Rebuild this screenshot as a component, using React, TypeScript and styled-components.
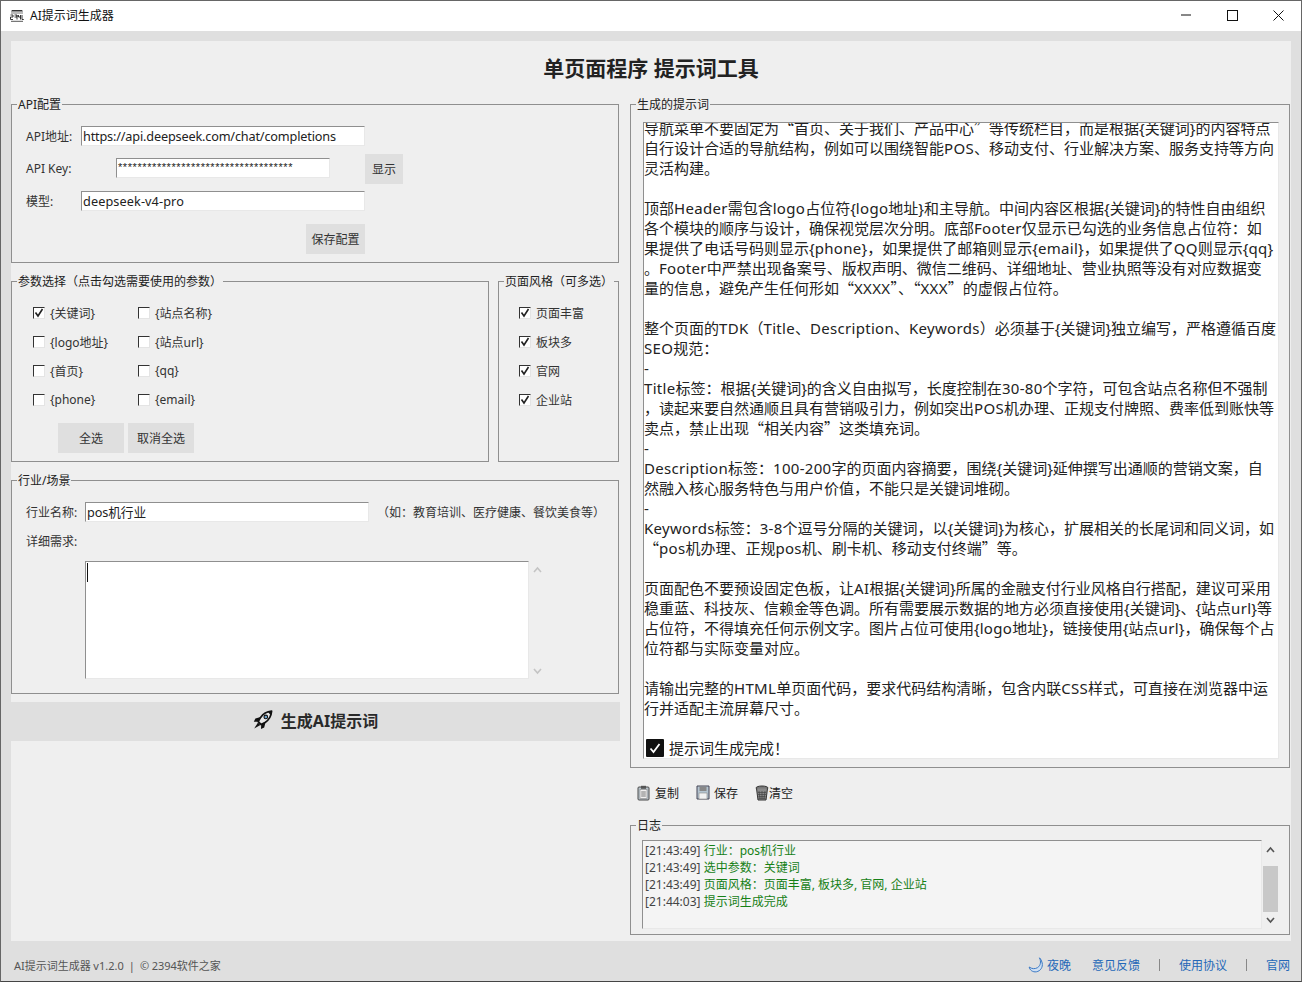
import React from "react";
import styled, { createGlobalStyle } from "styled-components";

const Global = createGlobalStyle`
  html, body { margin: 0; padding: 0; background: #dfdfdf; }
  * { box-sizing: border-box; }
  body { font-family: "Noto Sans", "Noto Sans CJK SC", sans-serif; font-size: 12px; color: #222; }
`;

const Win = styled.div`
  width: 1302px; height: 982px; display: flex; flex-direction: column;
  background: #dfdfdf; border: 1px solid #666; border-bottom-color: #444; overflow: hidden;
`;
const TitleBar = styled.div`
  height: 30px; flex: none; background: #fff; display: flex; align-items: center; padding: 0 0 2px 9px;
  font-size: 12px; color: #111;
`;
const TitleText = styled.span`flex: 1; margin-left: 6px;`;
const WinBtn = styled.span`
  width: 46px; height: 28px; display: flex; align-items: center; justify-content: center;
`;
const Main = styled.div`
  margin: 10px 10px 0; height: 900px; flex: none; background: #efefef; display: flex; flex-direction: column;
`;
const Heading = styled.h1`
  margin: 0; height: 55px; flex: none; padding-top: 12px; text-align: center; font-size: 21px; line-height: 30px; font-weight: 700; color: #222;
`;
const Cols = styled.div`
  display: flex; gap: 10px; align-items: flex-start;
`;
const Col = styled.div<{ $w: number }>`
  width: ${(p) => p.$w}px; flex: none; display: flex; flex-direction: column;
`;
const Group = styled.fieldset<{ $h: number; $w?: number; $mt?: number }>`
  margin: ${(p) => p.$mt ?? 0}px 0 0; padding: 0; min-width: 0; border: 1px solid #8f8f8f; height: ${(p) => p.$h}px;
  width: ${(p) => (p.$w ? p.$w + "px" : "auto")}; flex: none; display: block;
`;
const Legend = styled.legend`
  margin-left: 5px; padding: 2px 1px 0; height: 16px; font-size: 12px; line-height: 14px; color: #222;
`;
const ApiBody = styled.div`
  padding: 14px 0 0 14px; display: flex; flex-direction: column;
`;
const FormRow = styled.div<{ $h: number; $mt?: number }>`
  height: ${(p) => p.$h}px; margin-top: ${(p) => p.$mt ?? 0}px; display: flex; align-items: center;
`;
const Label = styled.label<{ $w: number; $mb?: number }>`
  width: ${(p) => p.$w}px; flex: none; font-size: 12px; color: #333; margin-bottom: ${(p) => p.$mb ?? 0}px;
`;
const Field = styled.div<{ $w: number; $ls?: number }>`
  width: ${(p) => p.$w}px; height: 20px; flex: none; background: #fff; padding-left: 1px; font-size: 12.7px; letter-spacing: ${(p) => p.$ls ?? -0.1}px; line-height: 19px; color: #222;
  border-top: 1px solid #8f8f8f; border-left: 1px solid #8f8f8f; border-right: 1px solid #e8e8e8; border-bottom: 1px solid #e8e8e8;
  white-space: nowrap; overflow: hidden;
`;
const Stars = styled(Field)`
  font-size: 11px; line-height: 17px; font-family: "Liberation Sans", sans-serif; letter-spacing: 0.58px; margin-bottom: 2px;
`;
const Btn = styled.button<{ $w: number; $ml?: number }>`
  width: ${(p) => p.$w}px; height: 30px; flex: none; margin-left: ${(p) => p.$ml ?? 0}px; border: 0; padding: 0 0 1px;
  background: #dfdfdf; font: inherit; font-size: 12px; color: #333;
`;
const SplitRow = styled.div`
  display: flex; gap: 9px; margin-top: 10px;
`;
const CheckGrid = styled.div`
  display: grid; grid-template-columns: 105px 120px; grid-auto-rows: 29px; padding: 9px 0 0 21px;
`;
const CheckOne = styled.div`
  display: flex; flex-direction: column; gap: 0; padding: 9px 0 0 20px;
`;
const CheckRow = styled.label`
  height: 29px; display: flex; align-items: center; gap: 5px; font-size: 12px; color: #333; white-space: nowrap;
`;
const Box = styled.span`
  width: 12px; height: 12px; flex: none; background: #fff; display: flex; align-items: center; justify-content: center;
  border-top: 1px solid #333; border-left: 1px solid #333; border-right: 1px solid #e4e4e4; border-bottom: 1px solid #e4e4e4;
`;
const BtnRow = styled.div`
  display: flex; gap: 4px; padding: 9px 0 0 46px;
`;
const IndustryBody = styled.div`
  padding: 14px 0 0 14px; display: flex; flex-direction: column;
`;
const Hint = styled.span`
  margin-left: 8px; font-size: 12px; color: #333; white-space: nowrap;
`;
const DetailLabel = styled.div`
  margin-top: 12px; height: 16px; line-height: 16px; font-size: 12px; color: #333;
`;
const TextRow = styled.div`
  display: flex; margin: 11px 0 0 73px; height: 118px;
`;
const TextBox = styled.div`
  width: 444px; height: 118px; background: #fff; padding: 1px 0 0 1px;
  border-top: 1px solid #8f8f8f; border-left: 1px solid #8f8f8f; border-right: 1px solid #e8e8e8; border-bottom: 1px solid #e8e8e8;
`;
const Caret = styled.div`width: 1px; height: 19px; background: #111;`;
const ScrollTrack = styled.div`
  width: 17px; display: flex; flex-direction: column; justify-content: space-between; align-items: center; padding: 5px 0 4px;
`;
const GenerateBtn = styled.button`
  margin-top: 8px; height: 39px; width: 609px; border: 0; background: #dfdfdf; display: flex; align-items: center; justify-content: center; gap: 8px;
  font: inherit; font-size: 16px; font-weight: 700; color: #2a2a2a; padding: 0 0 3px;
`;
const PromptBox = styled.div`
  margin: 10px 10px 0 12px; height: 637px; background: #fff; overflow: hidden;
  border-top: 1px solid #8f8f8f; border-left: 1px solid #8f8f8f; border-right: 1px solid #e8e8e8; border-bottom: 1px solid #e8e8e8;
`;
const PromptInner = styled.div`margin-top: -5px;`;
const Line = styled.div`
  height: 20px; line-height: 20px; font-size: 15px; color: #222; white-space: nowrap;
`;
const Quote = styled.span`font-family: "Noto Sans CJK SC", sans-serif;`;
const Latin = styled.span`letter-spacing: 0.3px;`;
const DoneLine = styled(Line)`
  display: flex; align-items: center; gap: 5px; padding-left: 2px;
`;
const Toolbar = styled.div`
  height: 49px; padding: 0 0 0 7px; display: flex; align-items: center; flex: none;
`;
const ToolBtn = styled.span<{ $mr: number; $gap: number }>`
  display: flex; align-items: center; gap: ${(p) => p.$gap}px; font-size: 12px; color: #222; margin-right: ${(p) => p.$mr}px;
`;
const LogRow = styled.div`
  display: flex; margin: 7px 9px 0 11px; height: 89px;
`;
const LogBox = styled.div`
  width: 620px; background: #f4f4f4; padding: 1px 0 0 2px;
  border-top: 1px solid #8f8f8f; border-left: 1px solid #8f8f8f; border-right: 1px solid #e8e8e8; border-bottom: 1px solid #e8e8e8;
`;
const LogLine = styled.div`
  height: 17px; line-height: 17px; font-size: 12px; color: #444; white-space: nowrap;
`;
const LogMsg = styled.span`color: #168016;`;
const LogScroll = styled.div`
  width: 17px; display: flex; flex-direction: column; align-items: center; padding-top: 6px;
`;
const Thumb = styled.div`width: 15px; height: 46px; background: #c8c8c8; margin: 13px 0 5px;`;
const Footer = styled.div`
  flex: 1; display: flex; align-items: center; justify-content: space-between; padding: 8px 11px 0 13px; font-size: 11px; color: #555;
`;
const FootText = styled.span`word-spacing: -0.3px;`;
const Links = styled.div`display: flex; align-items: center; color: #2468b8; font-size: 12px;`;
const Link = styled.span<{ $ml?: number }>`
  margin-left: ${(p) => p.$ml ?? 0}px; display: flex; align-items: center; gap: 3px;
`;
const Sep = styled.span`margin-left: 19px; width: 1px; height: 12px; background: #888;`;

const promptLines = [
  "导航菜单不要固定为“首页、关于我们、产品中心”等传统栏目，而是根据{关键词}的内容特点",
  "自行设计合适的导航结构，例如可以围绕智能POS、移动支付、行业解决方案、服务支持等方向",
  "灵活构建。",
  "",
  "顶部Header需包含logo占位符{logo地址}和主导航。中间内容区根据{关键词}的特性自由组织",
  "各个模块的顺序与设计，确保视觉层次分明。底部Footer仅显示已勾选的业务信息占位符：如",
  "果提供了电话号码则显示{phone}，如果提供了邮箱则显示{email}，如果提供了QQ则显示{qq}",
  "。Footer中严禁出现备案号、版权声明、微信二维码、详细地址、营业执照等没有对应数据变",
  "量的信息，避免产生任何形如“XXXX”、“XXX”的虚假占位符。",
  "",
  "整个页面的TDK（Title、Description、Keywords）必须基于{关键词}独立编写，严格遵循百度",
  "SEO规范：",
  "-",
  "Title标签：根据{关键词}的含义自由拟写，长度控制在30-80个字符，可包含站点名称但不强制",
  "，读起来要自然通顺且具有营销吸引力，例如突出POS机办理、正规支付牌照、费率低到账快等",
  "卖点，禁止出现“相关内容”这类填充词。",
  "-",
  "Description标签：100-200字的页面内容摘要，围绕{关键词}延伸撰写出通顺的营销文案，自",
  "然融入核心服务特色与用户价值，不能只是关键词堆砌。",
  "-",
  "Keywords标签：3-8个逗号分隔的关键词，以{关键词}为核心，扩展相关的长尾词和同义词，如",
  "“pos机办理、正规pos机、刷卡机、移动支付终端”等。",
  "",
  "页面配色不要预设固定色板，让AI根据{关键词}所属的金融支付行业风格自行搭配，建议可采用",
  "稳重蓝、科技灰、信赖金等色调。所有需要展示数据的地方必须直接使用{关键词}、{站点url}等",
  "占位符，不得填充任何示例文字。图片占位可使用{logo地址}，链接使用{站点url}，确保每个占",
  "位符都与实际变量对应。",
  "",
  "请输出完整的HTML单页面代码，要求代码结构清晰，包含内联CSS样式，可直接在浏览器中运",
  "行并适配主流屏幕尺寸。",
  "",
];

const renderLine = (text: string) =>
  text.split(/([“”]|[A-Za-z0-9-]+)/).map((part, i) => {
    if (part === "“" || part === "”") return <Quote key={i} lang="zh-CN">{part}</Quote>;
    if (/^[A-Za-z0-9-]+$/.test(part)) return <Latin key={i}>{part}</Latin>;
    return part;
  });

const Tick = () => (
  <svg width="10" height="10" viewBox="0 0 10 10"><path d="M1.5 4.5 L4 8 L8.5 1" fill="none" stroke="#222" strokeWidth="1.6" /></svg>
);
const Check = ({ on, children }: { on?: boolean; children: React.ReactNode }) => (
  <CheckRow><Box>{on && <Tick />}</Box>{children}</CheckRow>
);
const Chevron = ({ up, color }: { up?: boolean; color: string }) => (
  <svg width="9" height="7" viewBox="0 0 9 7"><path d={up ? "M1 6 L4.5 2 L8 6" : "M1 1 L4.5 5 L8 1"} fill="none" stroke={color} strokeWidth="1.6" /></svg>
);

const AppIcon = () => (
  <svg width="14" height="13" viewBox="0 0 14 13">
    <path d="M2 1 H12 L13 2.5 H1 Z" fill="#333" />
    <path d="M1 4 H13" stroke="#777" />
    <path d="M.5 6 H3 V8 H.5 V10.5 H3 M4.5 6 H7 V8 H4.5 M7 6 V10.5 M8.5 6 V8 H10.5 V10.5 M10.5 6 V8 M12 6 V10.5 H13.8" stroke="#222" strokeWidth="0.9" fill="none" />
    <path d="M1 12.3 H13" stroke="#555" />
  </svg>
);
const Rocket = () => (
  <svg width="20" height="20" viewBox="0 0 20 20">
    <path d="M18.6 1.2 C14 1.6 10.2 3.6 7.6 7.4 L5.2 11.6 L8.2 14.6 L12.4 12.2 C16.2 9.6 18.2 6 18.6 1.2 Z" fill="#e8e8e8" stroke="#111" strokeWidth="1.7" strokeLinejoin="round" />
    <circle cx="12.8" cy="6.9" r="1.8" fill="#6fa6cf" stroke="#111" strokeWidth="1.1" />
    <path d="M7.6 7 L2.4 8.4 L.8 11.8 L5.2 11.8 Z M12.6 12 L11.2 17.4 L8 19 L8.2 14.6 Z" fill="#111" />
    <path d="M5 12.4 L1.2 18.6 L7.4 15 Z" fill="#111" />
    <path d="M14.6 1.8 L18 5.2 L18.8 1 Z" fill="#111" />
  </svg>
);
const Clipboard = () => (
  <svg width="13" height="16" viewBox="0 0 13 16">
    <rect x="1" y="2" width="11" height="13" rx="1" fill="#b9c4cc" stroke="#4a4a4a" />
    <rect x="3" y="4.5" width="7" height="9" fill="#f0f0f0" stroke="#888" strokeWidth=".6" />
    <rect x="4" y="0.8" width="5" height="3" fill="#555" />
    <path d="M4.2 7 H8.8 M4.2 9 H8.8 M4.2 11 H8.8" stroke="#777" />
  </svg>
);
const Floppy = () => (
  <svg width="14" height="15" viewBox="0 0 14 15">
    <path d="M1 1 H13 V14 H1 Z" fill="#b4c4d0" stroke="#445" />
    <rect x="3.5" y="1.5" width="7" height="4.5" fill="#888" />
    <rect x="3" y="8" width="8" height="6" fill="#f2f2f2" stroke="#888" strokeWidth=".6" />
  </svg>
);
const Trash = () => (
  <svg width="14" height="16" viewBox="0 0 14 16">
    <ellipse cx="7" cy="3" rx="6" ry="2" fill="#777" stroke="#333" />
    <path d="M1.5 3.5 L3 15 H11 L12.5 3.5" fill="#8a8a8a" stroke="#333" />
    <path d="M4 6 L5 14 M7 6 V14 M10 6 L9 14 M3 7.5 H11 M3 9.5 H11 M3.5 11.5 H10.5 M3.5 13.3 H10.5" stroke="#444" strokeWidth=".7" />
  </svg>
);
const Moon = () => (
  <svg width="16" height="16" viewBox="0 0 16 16">
    <path d="M11.5 .8 C13.2 4.6 12.8 8.4 9.6 10.6 C7 12.2 3.8 12 1.2 10 C1.6 13 4.8 15.4 8.4 14.8 C12.6 14 15 10.2 14.2 6 C13.8 3.8 12.9 2.2 11.5 .8 Z" fill="#cfe0f4" stroke="#3a78c4" strokeWidth="1" strokeLinejoin="round" />
  </svg>
);

export default function App() {
  return (
    <Win>
      <Global />
      <TitleBar>
        <AppIcon />
        <TitleText>AI提示词生成器</TitleText>
        <WinBtn><svg width="12" height="2"><path d="M1 1 H11" stroke="#111" /></svg></WinBtn>
        <WinBtn><svg width="11" height="11"><rect x=".5" y=".5" width="10" height="10" fill="none" stroke="#111" /></svg></WinBtn>
        <WinBtn><svg width="11" height="11"><path d="M.5 .5 L10.5 10.5 M10.5 .5 L.5 10.5" stroke="#111" /></svg></WinBtn>
      </TitleBar>
      <Main>
        <Heading>单页面程序 提示词工具</Heading>
        <Cols>
          <Col $w={609}>
            <Group $h={167} $w={608}>
              <Legend>API配置</Legend>
              <ApiBody>
                <FormRow $h={20}>
                  <Label $w={55}>API地址:</Label>
                  <Field $w={284} $ls={-0.17}>https://api.deepseek.com/chat/completions</Field>
                </FormRow>
                <FormRow $h={30} $mt={8}>
                  <Label $w={90} $mb={2}>API Key:</Label>
                  <Stars $w={214}>************************************</Stars>
                  <Btn $w={38} $ml={35}>显示</Btn>
                </FormRow>
                <FormRow $h={20} $mt={7}>
                  <Label $w={55}>模型:</Label>
                  <Field $w={284} $ls={0.1}>deepseek-v4-pro</Field>
                </FormRow>
                <FormRow $h={30} $mt={13}>
                  <Btn $w={59} $ml={280}>保存配置</Btn>
                </FormRow>
              </ApiBody>
            </Group>
            <SplitRow>
              <Group $h={189} $w={478}>
                <Legend>参数选择（点击勾选需要使用的参数）</Legend>
                <CheckGrid>
                  <Check on>{"{关键词}"}</Check>
                  <Check>{"{站点名称}"}</Check>
                  <Check>{"{logo地址}"}</Check>
                  <Check>{"{站点url}"}</Check>
                  <Check>{"{首页}"}</Check>
                  <Check>{"{qq}"}</Check>
                  <Check>{"{phone}"}</Check>
                  <Check>{"{email}"}</Check>
                </CheckGrid>
                <BtnRow>
                  <Btn $w={66}>全选</Btn>
                  <Btn $w={66}>取消全选</Btn>
                </BtnRow>
              </Group>
              <Group $h={189} $w={121}>
                <Legend>页面风格（可多选）</Legend>
                <CheckOne>
                  <Check on>页面丰富</Check>
                  <Check on>板块多</Check>
                  <Check on>官网</Check>
                  <Check on>企业站</Check>
                </CheckOne>
              </Group>
            </SplitRow>
            <Group $h={222} $w={608} $mt={10}>
              <Legend>行业/场景</Legend>
              <IndustryBody>
                <FormRow $h={20}>
                  <Label $w={59}>行业名称:</Label>
                  <Field $w={284}>pos机行业</Field>
                  <Hint>（如：教育培训、医疗健康、餐饮美食等）</Hint>
                </FormRow>
                <DetailLabel>详细需求:</DetailLabel>
              </IndustryBody>
              <TextRow>
                <TextBox><Caret /></TextBox>
                <ScrollTrack>
                  <Chevron up color="#c4c4c4" />
                  <Chevron color="#c4c4c4" />
                </ScrollTrack>
              </TextRow>
            </Group>
            <GenerateBtn><Rocket />生成AI提示词</GenerateBtn>
          </Col>
          <Col $w={660}>
            <Group $h={672}>
              <Legend>生成的提示词</Legend>
              <PromptBox>
                <PromptInner>
                  {promptLines.map((t, i) => <Line key={i}>{renderLine(t)}</Line>)}
                  <DoneLine>
                    <svg width="18" height="18" viewBox="0 0 18 18"><rect width="18" height="18" rx="1" fill="#111" /><path d="M4.5 9.5 L7.5 13 L13.5 5" fill="none" stroke="#fff" strokeWidth="1.8" /></svg>
                    提示词生成完成！
                  </DoneLine>
                </PromptInner>
              </PromptBox>
            </Group>
            <Toolbar>
              <ToolBtn $mr={17} $gap={5}><Clipboard />复制</ToolBtn>
              <ToolBtn $mr={17} $gap={4}><Floppy />保存</ToolBtn>
              <ToolBtn $mr={0} $gap={0}><Trash />清空</ToolBtn>
            </Toolbar>
            <Group $h={118}>
              <Legend>日志</Legend>
              <LogRow>
                <LogBox>
                  <LogLine>[21:43:49] <LogMsg>行业：pos机行业</LogMsg></LogLine>
                  <LogLine>[21:43:49] <LogMsg>选中参数：关键词</LogMsg></LogLine>
                  <LogLine>[21:43:49] <LogMsg>页面风格：页面丰富, 板块多, 官网, 企业站</LogMsg></LogLine>
                  <LogLine>[21:44:03] <LogMsg>提示词生成完成</LogMsg></LogLine>
                </LogBox>
                <LogScroll>
                  <Chevron up color="#555" />
                  <Thumb />
                  <Chevron color="#555" />
                </LogScroll>
              </LogRow>
            </Group>
          </Col>
        </Cols>
      </Main>
      <Footer>
        <FootText>AI提示词生成器 v1.2.0 &nbsp;|&nbsp; © 2394软件之家</FootText>
        <Links>
          <Link><Moon />夜晚</Link>
          <Link $ml={21}>意见反馈</Link>
          <Sep />
          <Link $ml={19}>使用协议</Link>
          <Sep />
          <Link $ml={19}>官网</Link>
        </Links>
      </Footer>
    </Win>
  );
}
